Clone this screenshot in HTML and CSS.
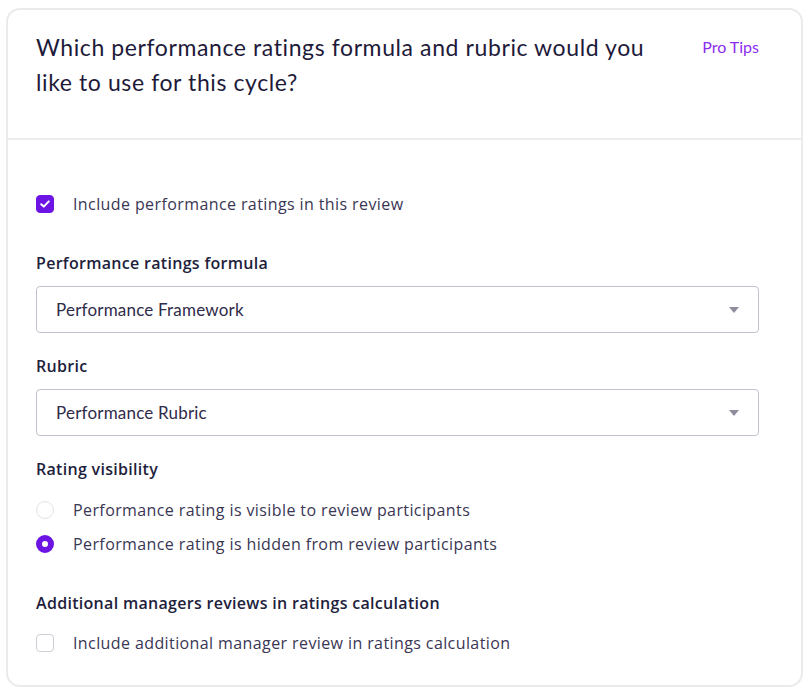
FILE: index.html
```html
<!DOCTYPE html>
<html lang="en">
  <head>
    <meta charset="UTF-8">
    <meta name="viewport" content="width=device-width, initial-scale=1.0">
    <title>Performance ratings</title>
    <link rel="stylesheet" href="styles.css">
  </head>
  <body>
    <div class="card">
      <div class="card-header">
        <h2 class="title">Which performance ratings formula and rubric would you like to use for this cycle?</h2>
        <a class="tips" href="#">Pro Tips</a>
      </div>
      <div class="card-body">
        <label class="check-row">
          <span class="checkbox checked">
            <svg viewBox="0 0 12 12" width="12" height="12"><path d="M2.2 6.2 L4.8 8.6 L9.8 3.4" fill="none" stroke="#fff" stroke-width="2" stroke-linecap="round" stroke-linejoin="round"/></svg>
          </span>
          <span class="option-text">Include performance ratings in this review</span>
        </label>

        <div class="field">
          <div class="field-label">Performance ratings formula</div>
          <div class="select">
            <span>Performance Framework</span>
            <span class="caret"></span>
          </div>
        </div>

        <div class="field">
          <div class="field-label">Rubric</div>
          <div class="select">
            <span>Performance Rubric</span>
            <span class="caret"></span>
          </div>
        </div>

        <div class="field">
          <div class="field-label">Rating visibility</div>
          <div class="radio-list">
            <label class="check-row">
              <span class="radio"></span>
              <span class="option-text">Performance rating is visible to review participants</span>
            </label>
            <label class="check-row">
              <span class="radio selected"></span>
              <span class="option-text">Performance rating is hidden from review participants</span>
            </label>
          </div>
        </div>

        <div class="field last">
          <div class="field-label">Additional managers reviews in ratings calculation</div>
          <label class="check-row single">
            <span class="checkbox"></span>
            <span class="option-text">Include additional manager review in ratings calculation</span>
          </label>
        </div>
      </div>
    </div>
  </body>
</html>
```

FILE: styles.css
```css
body {
  margin: 0;
  padding: 8px 8px 8px 6px;
  font-family: "Open Sans", "Liberation Sans", sans-serif;
  background-color: #fff;
  color: #2a2644;
}
.card {
  width: 797px;
  border: 2px solid #ebebeb;
  border-radius: 14px;
  box-sizing: border-box;
  background: #fff;
}
.card-header {
  display: flex;
  justify-content: space-between;
  align-items: flex-start;
  padding: 20px 42px 38px 28px;
  border-bottom: 2px solid #ededed;
}
.title {
  margin: 0;
  max-width: 650px;
  font-family: "Lato", "Liberation Sans", sans-serif;
  font-size: 23px;
  font-weight: 400;
  letter-spacing: 0.6px;
  line-height: 35px;
  color: #1e1a3a;
}
.tips {
  margin-top: 7px;
  font-family: "Lato", "Liberation Sans", sans-serif;
  font-size: 16px;
  color: #8b2cf0;
  text-decoration: none;
}
.card-body {
  padding: 53px 42px 31px 28px;
}
.check-row {
  display: flex;
  align-items: center;
  gap: 19px;
  font-size: 16px;
  letter-spacing: 0.4px;
  line-height: 22px;
}
.option-text {
  color: #3a3654;
}
.checkbox {
  width: 18px;
  height: 18px;
  box-sizing: border-box;
  border: 1.5px solid #cfcdd6;
  border-radius: 4px;
  display: flex;
  align-items: center;
  justify-content: center;
  flex-shrink: 0;
}
.checkbox.checked {
  background: #6c14e4;
  border-color: #6c14e4;
}
.field {
  margin-top: 37px;
}
.field + .field {
  margin-top: 22px;
}
.field.last {
  margin-top: 37px;
}
.field-label {
  font-size: 16px;
  font-weight: 600;
  letter-spacing: 0.3px;
  line-height: 22px;
  color: #221e3c;
  margin-bottom: 12px;
}
.select {
  height: 47px;
  box-sizing: border-box;
  border: 1px solid #c4c1cf;
  border-radius: 4px;
  display: flex;
  align-items: center;
  justify-content: space-between;
  padding: 0 19px;
  font-size: 17px;
  letter-spacing: 0.2px;
  font-family: "Lato", "Liberation Sans", sans-serif;
  color: #2f2b49;
}
.caret {
  width: 0;
  height: 0;
  border-left: 5px solid transparent;
  border-right: 5px solid transparent;
  border-top: 6px solid #8f8c9c;
}
.radio-list {
  display: flex;
  flex-direction: column;
  gap: 12px;
  margin-top: 19px;
}
.check-row.single {
  margin-top: 18px;
}
.radio {
  width: 18px;
  height: 18px;
  box-sizing: border-box;
  border: 1.5px solid #e2e1e6;
  border-radius: 50%;
  flex-shrink: 0;
}
.radio.selected {
  border: 6px solid #6c14e4;
}
```
